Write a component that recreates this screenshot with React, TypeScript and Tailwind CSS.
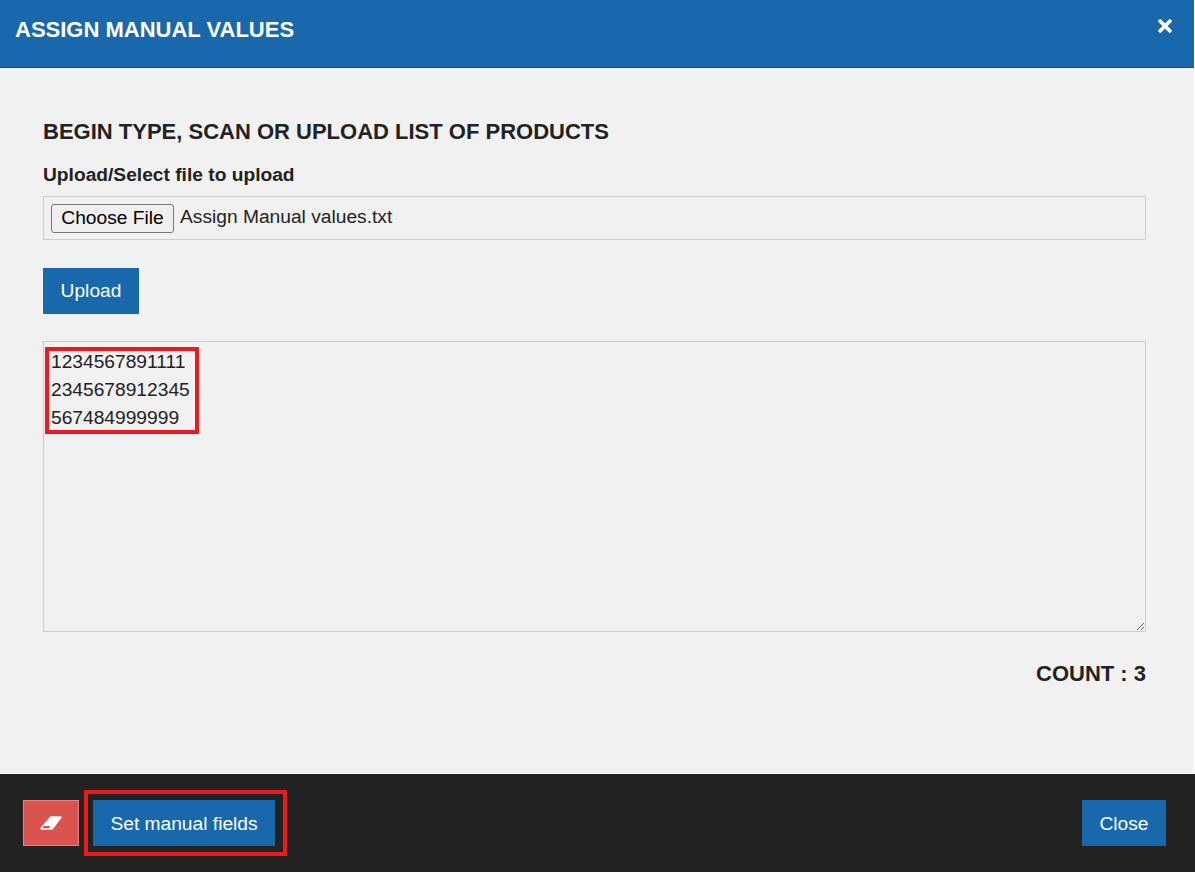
import { FaTimes } from "react-icons/fa";

const font = "font-['Liberation_Sans',Arial,sans-serif]";

const EraserIcon = () => (
  <svg width="22" height="14" viewBox="0 0 22 14">
    <path d="M10.5 0.3 H20 Q22.6 0.3 21 2.5 L13 13 Q12.5 13.8 11.5 13.8 H2 Q-.3 13.8 .8 11.5 Z" fill="#fff" />
    <path d="M3.6 10 H10.8 L8.9 12.2 H2.4 Z" fill="#d9534f" />
  </svg>
);

const App = () => {
  return (
    <div className={`${font} flex h-[872px] w-[1195px] flex-col overflow-hidden bg-white text-[19.2px] text-[#222]`}>
      <div className="flex h-[68px] w-[1194px] items-start justify-between border-b border-[#10497f] bg-[#1868ab] pl-[15px] pr-[20px] text-white">
        <h1 className="mt-[17px] text-[22px] leading-[26px] font-bold">ASSIGN MANUAL VALUES</h1>
        <button className="mt-[17px] flex h-[18px] w-[18px] items-center justify-center text-white">
          <FaTimes className="h-[20px] w-[18px]" />
        </button>
      </div>

      <div className="flex h-[705px] w-[1194px] flex-col bg-[#f1f1f1] px-[43px] pr-[48px]">
        <h2 className="mt-[51px] text-[22px] leading-[26px] font-bold">
          BEGIN TYPE, SCAN OR UPLOAD LIST OF PRODUCTS
        </h2>
        <label className="mt-[19px] leading-[22px] font-bold">Upload/Select file to upload</label>
        <div className="mt-[10px] flex h-[44px] items-center border border-[#ccc] pl-[7px]">
          <button className="flex h-[29px] w-[123px] items-center justify-center rounded-[3px] border border-[#767676] bg-[#efefef] text-black">
            Choose File
          </button>
          <span className="ml-[6px] -translate-y-px">Assign Manual values.txt</span>
        </div>
        <button className="mt-[28px] h-[46px] w-[96px] bg-[#1868ab] text-white">Upload</button>

        <div className="relative mt-[27px] h-[291px]">
          <textarea
            readOnly
            className="block h-[291px] w-full resize-y border border-[#ccc] bg-transparent px-[7px] py-[6px] leading-[28px] text-[#222] outline-none"
            defaultValue={"1234567891111\n2345678912345\n567484999999"}
          />
          <div className="absolute top-[6px] left-[2px] h-[87px] w-[154px] border-[4px] border-[#e81c1c]" />
        </div>

        <div className="mt-[29px] text-right text-[22px] leading-[26px] font-bold">COUNT : 3</div>
      </div>

      <div className="mt-px flex h-[98px] items-center justify-between bg-[#222222] pr-[29px] pl-[23px]">
        <div className="flex items-center">
          <button className="flex h-[46px] w-[56px] items-center justify-center border border-[#f08080] bg-[#d9534f]">
            <EraserIcon />
          </button>
          <div className="ml-[5px] border-[4px] border-[#e81c1c] py-[6px] pr-[8px] pl-[5px]">
            <button className="block h-[46px] w-[182px] bg-[#1868ab] pt-[2px] text-white">Set manual fields</button>
          </div>
        </div>
        <button className="h-[46px] w-[84px] bg-[#1868ab] pt-[2px] text-white">Close</button>
      </div>
    </div>
  );
};

export default App;
